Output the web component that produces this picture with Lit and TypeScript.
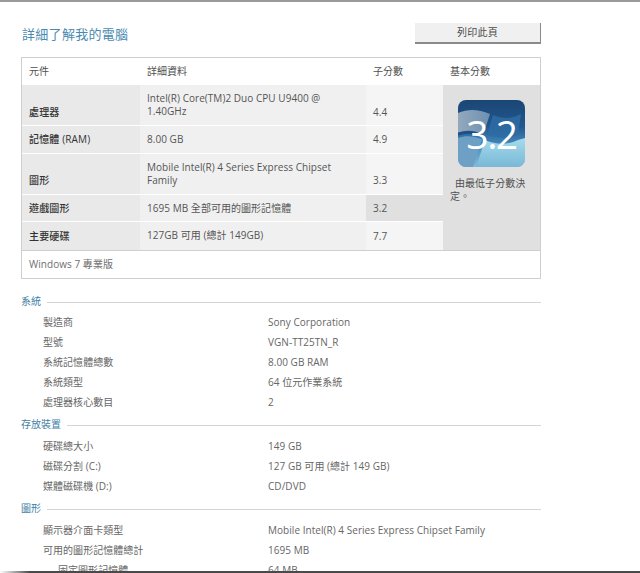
import { LitElement, html, css, svg } from "lit";
import { customElement } from "lit/decorators.js";

const rows = [
  { c: "處理器", d: "Intel(R) Core(TM)2 Duo CPU U9400 @ 1.40GHz", s: "4.4", h: 40 },
  { c: "記憶體 (RAM)", d: "8.00 GB", s: "4.9", h: 27 },
  { c: "圖形", d: "Mobile Intel(R) 4 Series Express Chipset Family", s: "3.3", h: 40 },
  { c: "遊戲圖形", d: "1695 MB 全部可用的圖形記憶體", s: "3.2", h: 26, low: true },
  { c: "主要硬碟", d: "127GB 可用 (總計 149GB)", s: "7.7", h: 28 },
];

const sections = [
  { t: "系統", items: [["製造商", "Sony Corporation"], ["型號", "VGN-TT25TN_R"], ["系統記憶體總數", "8.00 GB RAM"], ["系統類型", "64 位元作業系統"], ["處理器核心數目", "2"]] },
  { t: "存放裝置", items: [["硬碟總大小", "149 GB"], ["磁碟分割 (C:)", "127 GB 可用 (總計 149 GB)"], ["媒體磁碟機 (D:)", "CD/DVD"]] },
  { t: "圖形", items: [["顯示器介面卡類型", "Mobile Intel(R) 4 Series Express Chipset Family"], ["可用的圖形記憶體總計", "1695 MB"], ["固定圖形記憶體", "64 MB", true]] },
];

const badge = svg`<svg class="art" viewBox="0 0 67 67" width="67" height="67">
  <defs>
    <linearGradient id="bg" x1="0" y1="0" x2="0" y2="1">
      <stop offset="0" stop-color="#1a4674"/><stop offset=".4" stop-color="#21588f"/>
      <stop offset=".7" stop-color="#4a90c2"/><stop offset="1" stop-color="#86bad8"/>
    </linearGradient>
    <linearGradient id="p1" x1="0" y1="0" x2="1" y2="0">
      <stop offset="0" stop-color="#93a9bd"/><stop offset="1" stop-color="#6d90b0"/>
    </linearGradient>
    <linearGradient id="p3" x1="0" y1="0" x2="0" y2="1">
      <stop offset="0" stop-color="#a5dbec"/><stop offset="1" stop-color="#79b8d6"/>
    </linearGradient>
    <clipPath id="rr"><rect width="67" height="67" rx="8"/></clipPath>
  </defs>
  <g clip-path="url(#rr)">
    <rect width="67" height="67" fill="url(#bg)"/>
    <path d="M0 13C10 9 20 9 32 14L25 35C16 31 8 31 0 34Z" fill="url(#p1)"/>
    <path d="M0 38C8 35 16 36 24 39L15 67H0Z" fill="#6da0c4"/>
    <path d="M27 40C38 45 50 45 60 40L67 38V67H18Z" fill="url(#p3)"/>
    <path d="M35 15C45 19 54 19 63 14L60 35C50 39 40 38 29 35Z" fill="#2f6ba3" opacity=".85"/>
    <path d="M0 34C9 31 17 32 25 36" stroke="#1f4f85" stroke-width="3" fill="none"/>
  </g>
</svg>`;

@customElement("app-root")
export class AppRoot extends LitElement {
  static styles = css`
    :host {
      display: block;
      position: relative;
      width: 640px;
      height: 573px;
      overflow: hidden;
      background: #fff;
      box-sizing: border-box;
      border-top: 2px solid #9a9a9a;
      color: #666;
      font: 10px/13.5px "Open Sans", "Noto Sans CJK TC", sans-serif;
      letter-spacing: .04px;
    }
    .page { padding: 21px 99px 0 21px; }
    .head { display: flex; justify-content: space-between; align-items: center; height: 21px; margin-bottom: 13px; }
    h1 { margin: 0 0 0 1px; font-size: 13px; letter-spacing: .3px; font-weight: 400; line-height: 21px; color: #4a8ab0; position: relative; top: 1px; }
    .print {
      box-sizing: border-box; width: 126px; height: 21px; padding: 0; background: #f0f0f0;
      border: 0; border-right: 1px solid #8a8a8a; border-bottom: 2px solid #8a8a8a;
      font: inherit; color: #4a4a4a; letter-spacing: .2px;
    }
    .table { border: 1px solid #cfcfcf; width: 518px; }
    .thead, .row { display: grid; grid-template-columns: 118px 226px 77px; }
    .thead { grid-template-columns: 118px 226px 77px 97px; height: 27px; align-items: center; color: #4f4f4f; }
    .thead span { padding-left: 7px; }
    .body { display: grid; grid-template-columns: 421px 97px; border-bottom: 1px solid #cfcfcf; }
    .rows { display: flex; flex-direction: column; gap: 1px; }
    .cell { display: flex; align-items: center; padding: 0 7px; box-sizing: border-box; color: #555; }
    .cell.c { background: #e9e9e9; color: #333; font-weight: 500; align-items: flex-end; padding-bottom: 7px; letter-spacing: .15px; }
    .cell.d { background: #f0f0f0; }
    .cell.s { background: #f5f5f5; align-items: flex-end; padding-bottom: 7px; }
    .row:first-child .cell.c, .row:first-child .cell.s { padding-bottom: 6px; }
    .row:nth-child(4) .cell.c, .row:nth-child(4) .cell.s { padding-bottom: 6px; }
    .row:nth-child(4) .cell.d { padding-top: 1px; }
    .cell.s.low { background: #e0e0e0; }
    .base { background: #e0e0e0; padding: 15px 8px 0 7px; color: #4f4f4f; }
    .badge { position: relative; width: 67px; height: 67px; margin-left: 8px; margin-bottom: 10px; }
    .art { display: block; }
    .num {
      position: absolute; inset: 0; display: flex; align-items: center; justify-content: center;
      color: #fff; font-size: 39px; font-weight: 400; line-height: 67px; letter-spacing: -1.5px;
    }
    .note { text-indent: 5px; margin: 0; line-height: 13px; }
    .edition { height: 27px; display: flex; align-items: center; padding-left: 7px; color: #6f6f6f; }
    .sec { display: flex; align-items: center; gap: 6px; height: 14px; margin-bottom: 5px; color: #3f7fa6; }
    .sec::after { content: ""; flex: 1; height: 1px; background: #d4d4d4; }
    .sec:first-child { margin-bottom: 4px; }
    .list { display: flex; flex-direction: column; margin-bottom: 5px; }
    .item { display: grid; grid-template-columns: 225px 1fr; height: 20px; align-items: center; padding-left: 22px; }
    .item.sub span:first-child { padding-left: 15px; }
    .details { width: 520px; margin-top: 16px; }
    .bottom { position: absolute; left: 0; right: 0; bottom: 0; height: 2px; background: linear-gradient(90deg, #fff, #4a4a4a 30px); }
  `;

  render() {
    return html`
      <div class="page">
        <div class="head">
          <h1>詳細了解我的電腦</h1>
          <button class="print">列印此頁</button>
        </div>
        <div class="table">
          <div class="thead"><span>元件</span><span>詳細資料</span><span>子分數</span><span>基本分數</span></div>
          <div class="body">
            <div class="rows">
              ${rows.map(
                (r) => html`<div class="row" style="height:${r.h}px">
                  <div class="cell c">${r.c}</div>
                  <div class="cell d">${r.d}</div>
                  <div class="cell s ${r.low ? "low" : ""}">${r.s}</div>
                </div>`
              )}
            </div>
            <div class="base">
              <div class="badge">${badge}<div class="num">3.2</div></div>
              <p class="note">由最低子分數決定。</p>
            </div>
          </div>
          <div class="edition">Windows 7 專業版</div>
        </div>
        <div class="details">
          ${sections.map(
            (s) => html`<div class="sec">${s.t}</div>
              <div class="list">
                ${s.items.map(
                  (i) => html`<div class="item ${i[2] ? "sub" : ""}"><span>${i[0]}</span><span>${i[1]}</span></div>`
                )}
              </div>`
          )}
        </div>
      </div>
      <div class="bottom"></div>
    `;
  }
}
